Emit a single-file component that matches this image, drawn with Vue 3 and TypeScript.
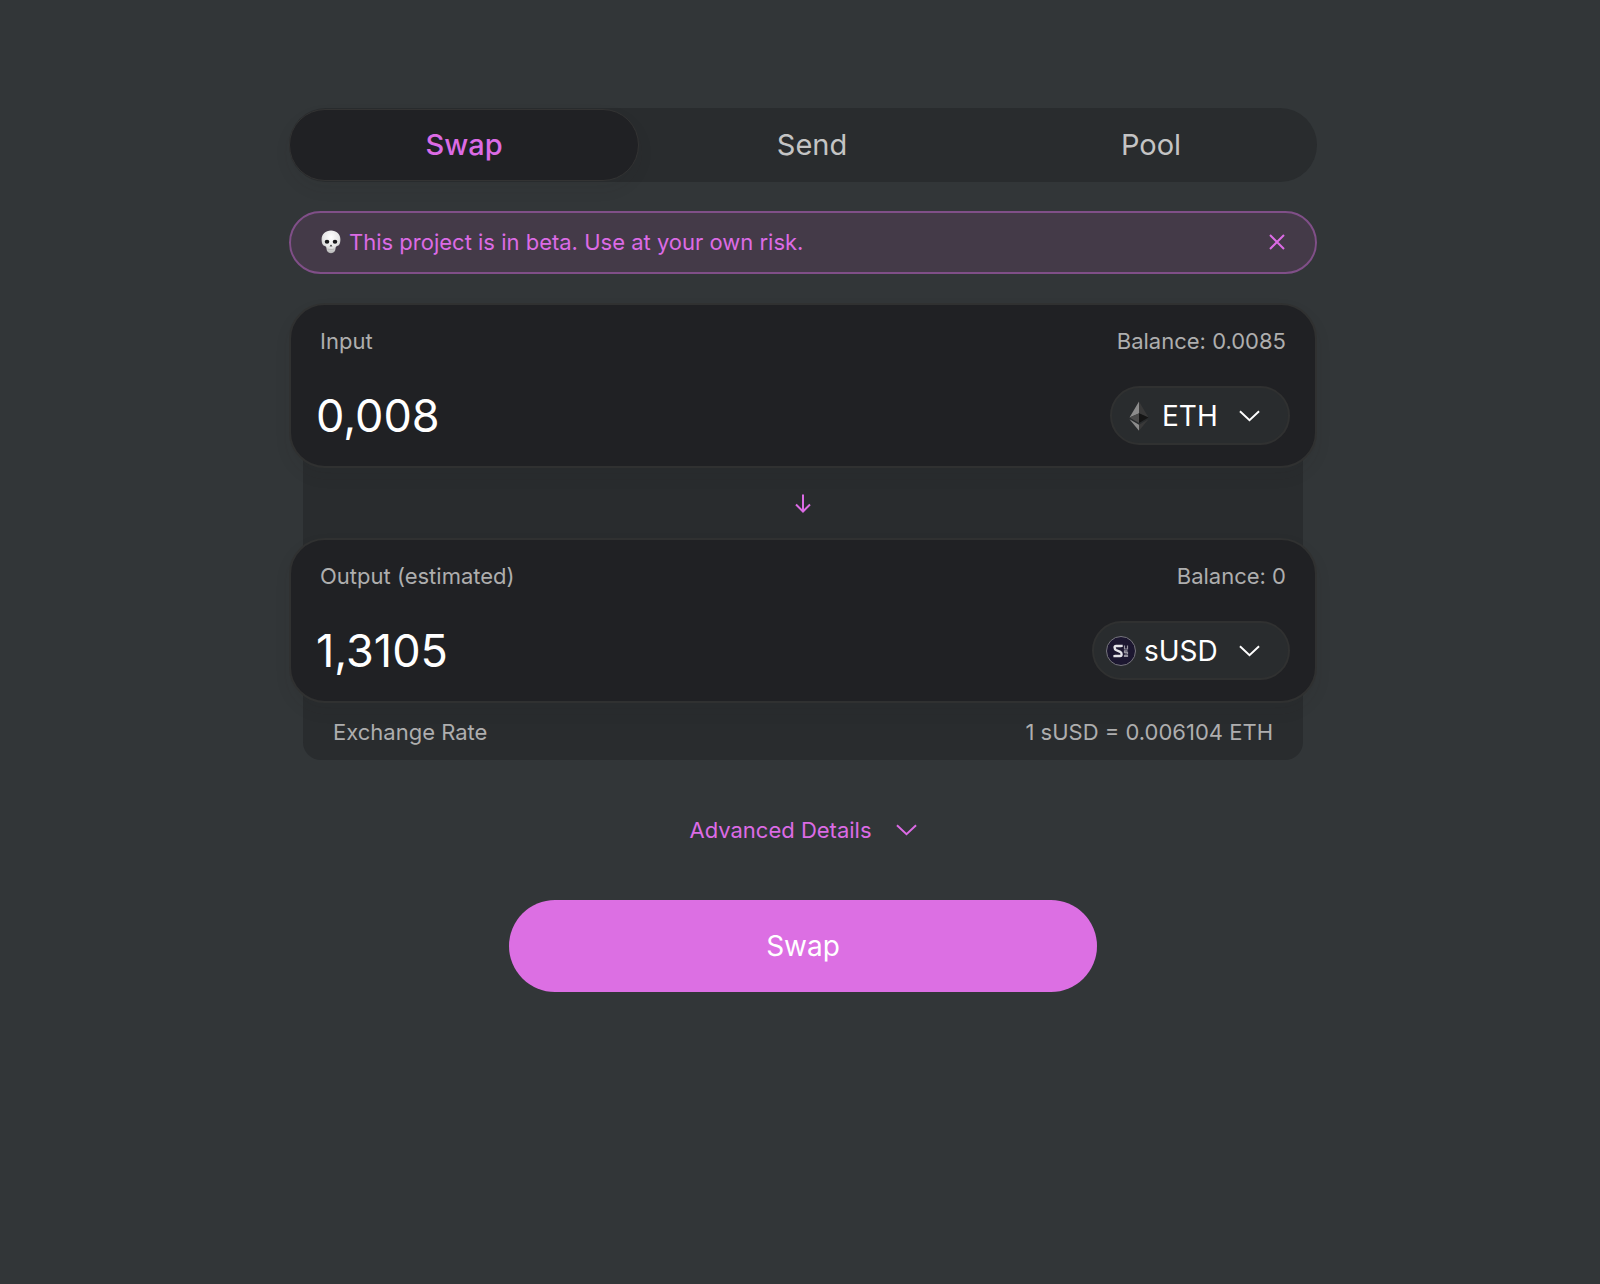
<script setup lang="ts">
import { ref } from 'vue'

const tabs = ['Swap', 'Send', 'Pool']
const activeTab = ref('Swap')
const showBeta = ref(true)
const showDetails = ref(false)
const inputAmount = ref('0,008')
const outputAmount = ref('1,3105')
const inputToken = ref('ETH')
const outputToken = ref('sUSD')
</script>

<template>
  <main class="page">
    <nav class="tabs" aria-label="Sections">
      <a
        v-for="tab in tabs"
        :key="tab"
        :href="`#${tab.toLowerCase()}`"
        class="tab"
        :class="{ active: tab === activeTab }"
        @click.prevent="activeTab = tab"
      >{{ tab }}</a>
    </nav>

    <div v-if="showBeta" class="beta">
      <svg class="skull" viewBox="0 0 20 24" aria-hidden="true">
        <defs>
          <radialGradient id="bone" cx="50%" cy="30%" r="70%">
            <stop offset="0" stop-color="#ffffff" />
            <stop offset="0.6" stop-color="#e6e6e6" />
            <stop offset="1" stop-color="#b4b4b4" />
          </radialGradient>
        </defs>
        <path fill="url(#bone)" d="M10 .5C4.500.5.6 4.200.6 9.200c0 2 .2 3.400.8 4.800.5 1.200 1.500 1.800 2.800 2.200.9.300 1.100.8 1.200 1.800.2 3.400 1.500 5.200 4.600 5.200s4.400-1.800 4.600-5.200c.1-1 .3-1.500 1.200-1.800 1.300-.4 2.300-1 2.800-2.200.6-1.400.8-2.800.8-4.800C19.400 4.200 15.500.5 10 .5z" />
        <ellipse cx="6" cy="11.800" rx="2.300" ry="2" fill="#18181a" />
        <ellipse cx="14" cy="11.800" rx="2.300" ry="2" fill="#18181a" />
        <path fill="#2a2a2c" d="M10 14.600 8.600 16.600h1l.4-.5.4.5h1z" />
        <path fill="none" stroke="#a2a2a2" stroke-width=".6" d="M6.600 19c2.200.8 4.600.8 6.800 0" />
      </svg>
      <span class="beta-text">This project is in beta. Use at your own risk.</span>
      <button type="button" class="close" aria-label="Dismiss" @click="showBeta = false">
        <svg viewBox="0 0 16 16" width="16" height="16" aria-hidden="true"><path d="M1 1l14 14M15 1 1 15" /></svg>
      </button>
    </div>

    <section class="card">
      <div class="card-top">
        <label for="amount-in">Input</label>
        <span>Balance: 0.0085</span>
      </div>
      <div class="card-main">
        <input id="amount-in" v-model="inputAmount" class="amount" type="text" inputmode="decimal">
        <div class="token">
          <svg class="token-icon" viewBox="0 0 30 30" aria-hidden="true">
            <path fill="#8c8c8c" d="M15 .5v12L5.500 16.500z" />
            <path fill="#393939" d="M15 .5v12l9.500 4z" />
            <path fill="#4b4b4b" d="M15 12.200v9.700l-9.500-5.400z" />
            <path fill="#151515" d="M15 12.200v9.700l9.500-5.400z" />
            <path fill="#8c8c8c" d="M5.500 18.300 15 23.700v6z" />
            <path fill="#393939" d="M24.500 18.300 15 23.700v6z" />
          </svg>
          <select v-model="inputToken" aria-label="Input token">
            <option>ETH</option>
          </select>
          <svg class="chevron" viewBox="0 0 22 14" aria-hidden="true"><path d="M1 2l10 9.500L21 2" /></svg>
        </div>
      </div>
    </section>

    <div class="link-panel arrow-panel">
      <svg class="arrow" viewBox="0 0 18 20" aria-hidden="true"><path d="M9 1.500v17M2 11.500l7 7 7-7" /></svg>
    </div>

    <section class="card">
      <div class="card-top">
        <label for="amount-out">Output (estimated)</label>
        <span>Balance: 0</span>
      </div>
      <div class="card-main">
        <input id="amount-out" v-model="outputAmount" class="amount" type="text" inputmode="decimal">
        <div class="token">
          <svg class="token-icon" viewBox="0 0 30 30" aria-hidden="true">
            <circle cx="15" cy="15" r="14.500" fill="#1c1730" stroke="#77757d" />
            <path fill="none" stroke="#e4e3e8" stroke-width="2.400" d="M15.500 11V10H10Q8.600 10 8.600 11.600t1.400 2.400l4.200 1.800Q15.600 16.600 15.600 18.300T14.200 20H8.600v-1" />
            <path fill="none" stroke="#96949f" stroke-width="1.200" d="M18.500 9.500v3.500h3V9.500M21.500 14.800h-3v1.500h3V18h-3M18.500 20.500h3v-1h-3z" />
          </svg>
          <select v-model="outputToken" aria-label="Output token">
            <option>sUSD</option>
          </select>
          <svg class="chevron" viewBox="0 0 22 14" aria-hidden="true"><path d="M1 2l10 9.500L21 2" /></svg>
        </div>
      </div>
    </section>

    <div class="link-panel rate-panel">
      <span>Exchange Rate</span>
      <span>1 sUSD = 0.006104 ETH</span>
    </div>

    <button type="button" class="details" :aria-expanded="showDetails" @click="showDetails = !showDetails">
      Advanced Details
      <svg class="chevron" viewBox="0 0 22 14" aria-hidden="true"><path d="M1 2l10 9.500L21 2" /></svg>
    </button>

    <button type="button" class="submit">Swap</button>
  </main>
</template>

<style>
body {
  background: #323638;
}
</style>

<style scoped>
.page {
  box-sizing: border-box;
  width: 100%;
  max-width: 1028px;
  margin: 0 auto;
  padding: 108px 0 64px;
  position: relative;
  left: 3px;
  display: flex;
  flex-direction: column;
  font-family: Inter, "Liberation Sans", sans-serif;
  font-size: 22px;
  line-height: 28px;
  color: #aeaeae;
}

button,
input,
select {
  font: inherit;
  color: inherit;
  border: 0;
  padding: 0;
  margin: 0;
  background: none;
  appearance: none;
}

button,
select {
  cursor: pointer;
}

.tabs {
  display: grid;
  grid-template-columns: 350fr 332fr 332fr;
  gap: 7px;
  height: 74px;
  background: #292c2e;
  border-radius: 37px;
}

.tab {
  display: flex;
  align-items: center;
  justify-content: center;
  font-size: 29px;
  color: #c4c4c4;
  text-decoration: none;
  border-radius: 36px;
}

.tab.active {
  margin: 1px 0;
  background: #202124;
  border: 1px solid #333333;
  box-shadow: 0 8px 16px rgba(32, 33, 36, 0.08);
  color: #dc6be5;
  font-weight: 500;
}

.beta {
  display: flex;
  align-items: center;
  box-sizing: border-box;
  height: 63px;
  margin: 29px 0;
  padding: 0 30px 2px;
  background: #443a48;
  border: 2px solid #804f88;
  border-radius: 32px;
  color: #dc6be5;
}

.skull {
  width: 20px;
  height: 24px;
  margin-right: 8px;
}

.beta-text {
  flex: 1;
}

.close {
  display: flex;
}

.close path {
  fill: none;
  stroke: currentColor;
  stroke-width: 2;
}

.card {
  position: relative;
  z-index: 1;
  padding: 22px 0 21px;
  background: #202124;
  border: 2px solid #303131;
  border-radius: 36px;
  box-shadow: 0 8px 16px rgba(32, 33, 36, 0.08);
}

.card-top {
  display: flex;
  justify-content: space-between;
  padding: 0 29px;
}

.card-main {
  display: flex;
  align-items: center;
  justify-content: space-between;
  margin-top: 31px;
  padding: 0 25px;
}

.amount {
  flex: 1;
  min-width: 0;
  height: 59px;
  font-size: 45px;
  color: #ffffff;
  outline: none;
}

.token {
  display: flex;
  align-items: center;
  box-sizing: border-box;
  height: 59px;
  padding: 0 28px 0 12px;
  background: #292c2e;
  border: 2px solid #303131;
  border-radius: 30px;
  color: #ffffff;
}

.token-icon {
  width: 30px;
  height: 30px;
  margin-right: 8px;
}

.token select {
  height: 40px;
  font-size: 28px;
  outline: none;
}

.token .chevron {
  margin-left: 21px;
  pointer-events: none;
}

.chevron {
  width: 21px;
  height: 14px;
}

.chevron path,
.arrow path {
  fill: none;
  stroke: currentColor;
  stroke-width: 2;
}

.link-panel {
  display: flex;
  align-items: center;
  box-sizing: border-box;
  margin: 0 14px;
  background: #292c2e;
}

/* The panels slide under the rounded corners of the cards. */
.arrow-panel {
  justify-content: center;
  height: 142px;
  margin-top: -36px;
  margin-bottom: -36px;
  color: #dc6be5;
}

.arrow {
  width: 18px;
  height: 20px;
}

.rate-panel {
  justify-content: space-between;
  height: 93px;
  margin-top: -36px;
  padding: 36px 30px 0;
  border-radius: 0 0 18px 18px;
}

.details {
  display: flex;
  align-items: center;
  align-self: center;
  gap: 24px;
  margin-top: 56px;
  color: #dc6be5;
}

.submit {
  align-self: center;
  width: 588px;
  max-width: 100%;
  height: 92px;
  margin-top: 56px;
  background: #dc6fe3;
  border-radius: 46px;
  color: #ffffff;
  font-size: 28px;
}
</style>
